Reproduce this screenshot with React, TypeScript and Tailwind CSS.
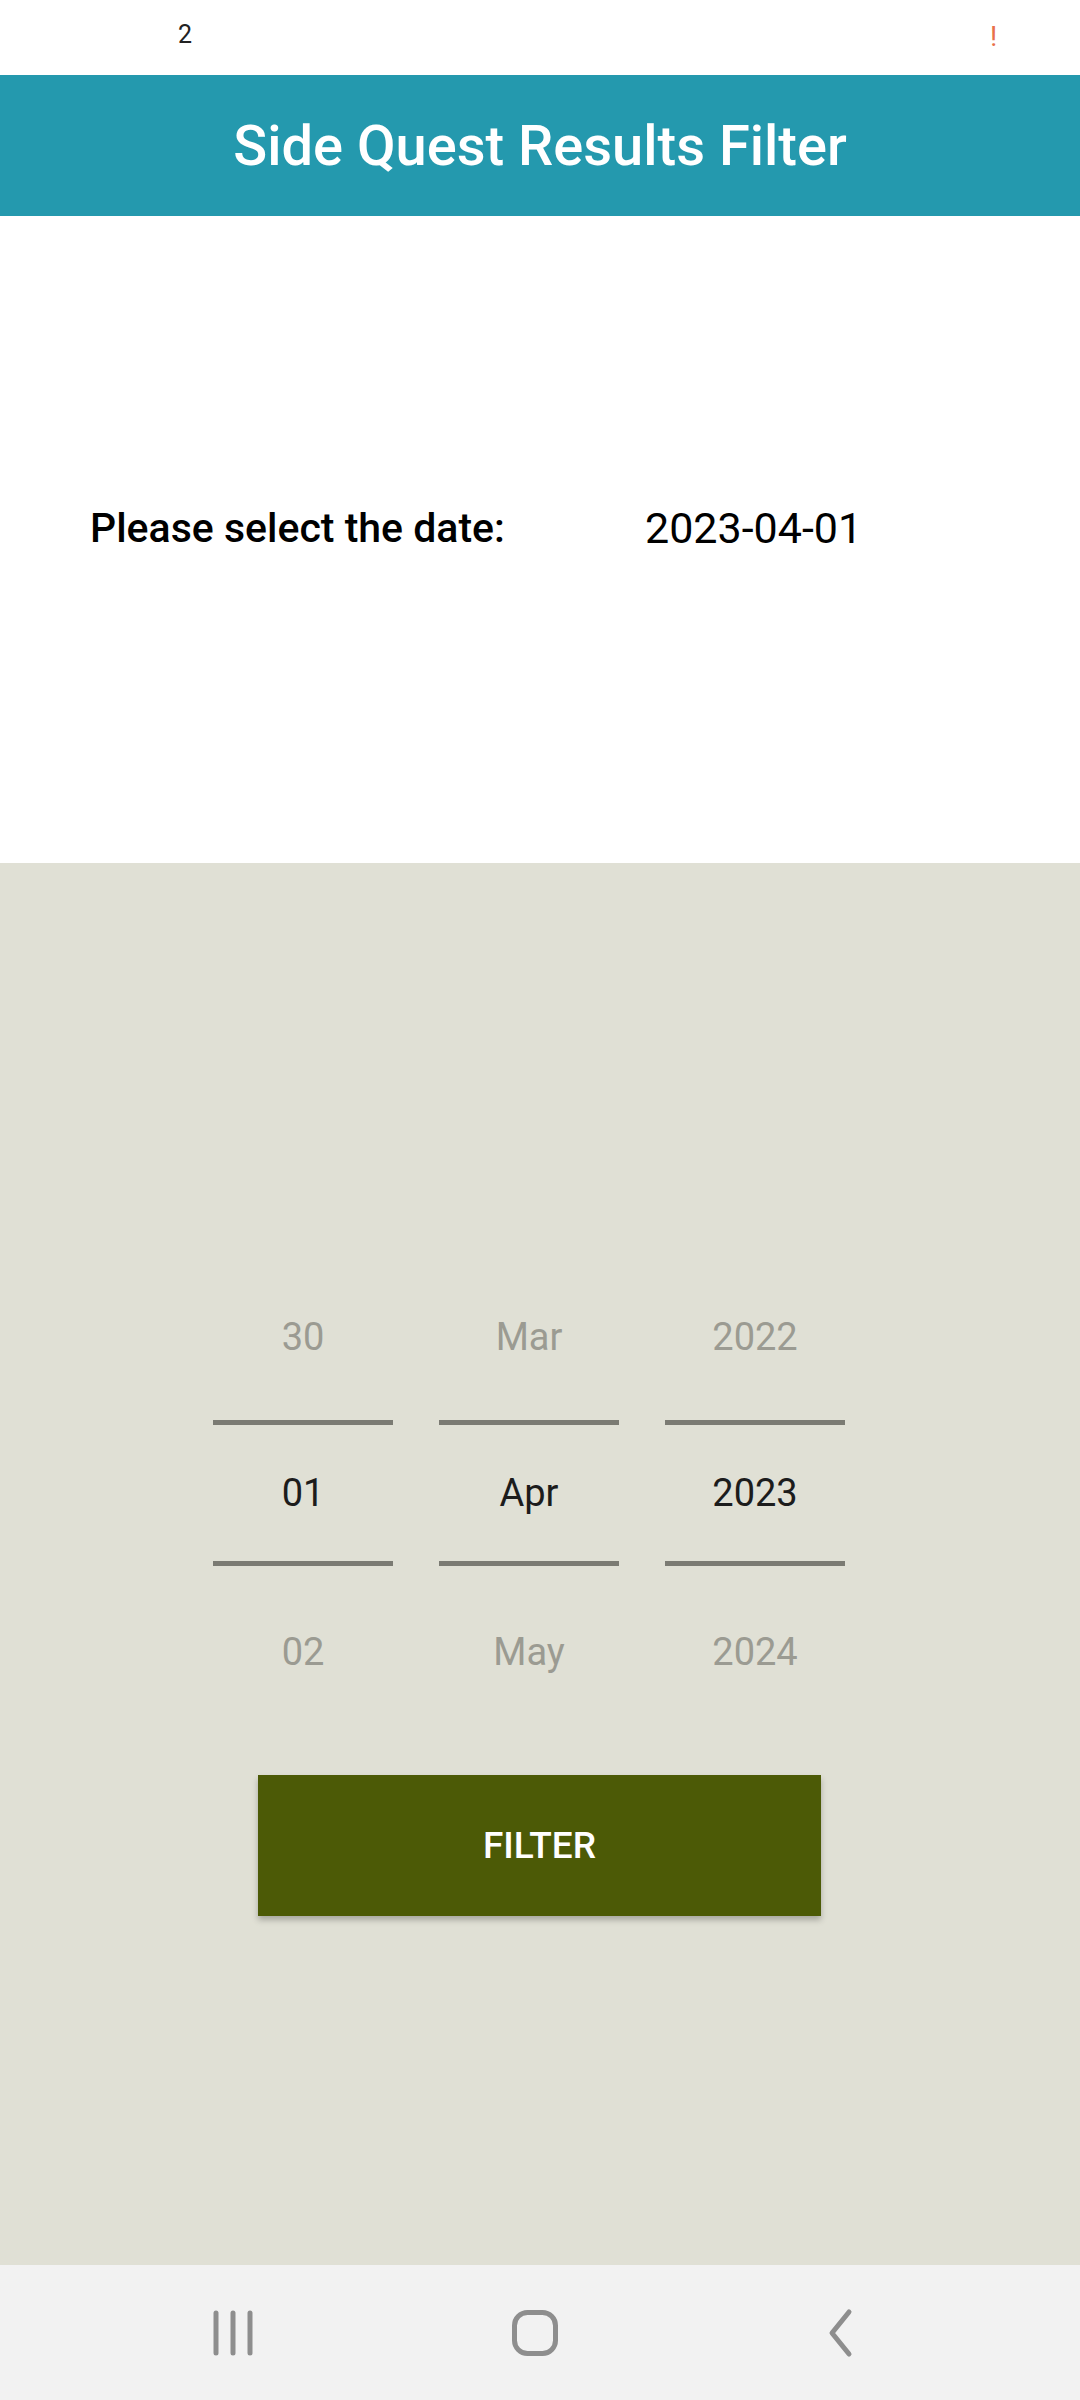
import React from "react";

const font = { fontFamily: "Roboto, 'Noto Sans', sans-serif" };

function Column({ top, mid, bot }: { top: string; mid: string; bot: string }) {
  return (
    <div className="flex w-[180px] flex-col items-center">
      <div className="flex h-[100px] w-full items-center justify-center text-[38px] leading-[100px] text-[#9b9b92]">{top}</div>
      <div className="mt-[33px] h-[5px] w-full bg-[#7b7b73]" />
      <div className="flex h-[136px] w-full items-center justify-center text-[38px] leading-[136px] text-[#1c1c1c]">{mid}</div>
      <div className="h-[5px] w-full bg-[#7b7b73]" />
      <div className="mt-[36px] flex h-[100px] w-full items-center justify-center text-[38px] leading-[100px] text-[#9b9b92]">{bot}</div>
    </div>
  );
}

export default function App() {
  return (
    <div className="flex h-[2400px] w-[1080px] flex-col overflow-hidden bg-white" style={font}>
      {/* status bar */}
      <div className="relative h-[75px] w-full bg-white">
        <span className="absolute left-[178px] top-[20px] text-[25px] leading-[30px] text-[#222]">2</span>
        <span className="absolute left-[990px] top-[21px] text-[28px] leading-[32px] text-[#e8704a]">!</span>
      </div>
      {/* header */}
      <div className="flex h-[141px] w-full items-center justify-center bg-[#2499ae]">
        <span className="text-[56px] font-medium leading-none text-white">Side Quest Results Filter</span>
      </div>
      {/* white section */}
      <div className="h-[647px] w-full bg-white">
        <div className="mt-[287px] flex h-[50px] items-center">
          <span className="ml-[90px] w-[555px] text-[41px] font-medium leading-[50px] text-black">Please select the date:</span>
          <span className="text-[43px] leading-[50px] text-black">2023-04-01</span>
        </div>
      </div>
      {/* gray section */}
      <div className="flex h-[1402px] w-full flex-col bg-[#e0e0d5]">
        <div className="mt-[424px] flex gap-[46px] pl-[213px]">
          <Column top="30" mid="01" bot="02" />
          <Column top="Mar" mid="Apr" bot="May" />
          <Column top="2022" mid="2023" bot="2024" />
        </div>
        <button className="ml-[258px] mt-[73px] flex h-[141px] w-[563px] items-center justify-center bg-[#4c5a06] text-[37px] font-medium text-white shadow-[0_4px_6px_rgba(0,0,0,0.25)]">
          FILTER
        </button>
      </div>
      {/* nav bar */}
      <div className="flex h-[135px] w-full items-center bg-[#f2f2f2]">
        <svg className="ml-[210px]" width="46" height="48" viewBox="0 0 46 48">
          <g stroke="#8e8e8e" strokeWidth="5" strokeLinecap="round">
            <line x1="6" y1="4" x2="6" y2="44" />
            <line x1="23" y1="4" x2="23" y2="44" />
            <line x1="40" y1="4" x2="40" y2="44" />
          </g>
        </svg>
        <svg className="ml-[254px]" width="50" height="50" viewBox="0 0 50 50">
          <rect x="4.5" y="4.5" width="41" height="41" rx="13" fill="none" stroke="#8e8e8e" strokeWidth="5" />
        </svg>
        <svg className="ml-[263px]" width="34" height="50" viewBox="0 0 34 50">
          <polyline points="26,4 9,25 26,46" fill="none" stroke="#8e8e8e" strokeWidth="5" strokeLinecap="round" strokeLinejoin="round" />
        </svg>
      </div>
    </div>
  );
}
